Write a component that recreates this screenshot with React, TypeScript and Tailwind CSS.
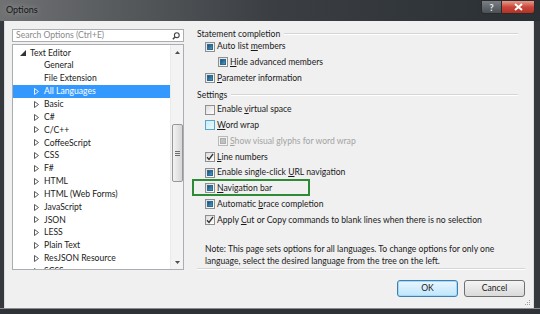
import React from 'react'

type BoxState = 'mixed' | 'checked' | 'unchecked' | 'hover' | 'disabled'

function CheckBox({ state }: { state: BoxState }) {
    if (state === 'checked') {
        return (
            <span className="w-[10px] h-[10px] border border-[#8f8f8f] bg-gradient-to-br from-[#dcdcdc] to-white flex items-center justify-center shrink-0">
                <svg width="8" height="8" viewBox="0 0 8 8">
                    <path d="M1 4.2 L3 6.4 L7 1" stroke="#333" strokeWidth="1.3" fill="none" />
                </svg>
            </span>
        )
    }
    if (state === 'hover') {
        return <span className="w-[10px] h-[10px] border border-[#5aa5c8] bg-gradient-to-br from-[#c9eef8] to-[#e9f8fc] shrink-0" />
    }
    if (state === 'unchecked') {
        return <span className="w-[10px] h-[10px] border border-[#8f8f8f] bg-gradient-to-br from-[#dcdcdc] to-white shrink-0" />
    }
    if (state === 'disabled') {
        return (
            <span className="w-[10px] h-[10px] border border-[#b9b9b9] bg-[#f4f4f4] flex items-center justify-center shrink-0">
                <span className="w-[6px] h-[6px] bg-[#c2c2c2] border border-[#adadad]" />
            </span>
        )
    }
    return (
        <span className="w-[10px] h-[10px] border border-[#8f8f8f] bg-gradient-to-br from-[#dcdcdc] to-white flex items-center justify-center shrink-0">
            <span className="w-[6px] h-[6px] bg-gradient-to-br from-[#1e4f78] to-[#4a9cc0] border border-[#2c6a92]" />
        </span>
    )
}

function Option({ state, indent, disabled, children }: { state: BoxState; indent?: boolean; disabled?: boolean; children: React.ReactNode }) {
    return (
        <div className={`h-[16px] flex items-center gap-[2px] whitespace-nowrap ${indent ? 'pl-[21px]' : 'pl-[8px]'}`}>
            <CheckBox state={state} />
            <span className={disabled ? 'text-[#a3a3a3]' : 'text-[#1a1a1a]'}>{children}</span>
        </div>
    )
}

function GroupHeader({ label, className }: { label: string; className?: string }) {
    return (
        <div className={`flex items-center gap-[4px] pr-[7px] ${className ?? ''}`}>
            <span className="text-[#1a1a1a]">{label}</span>
            <span className="flex-1 h-[2px] border-t border-[#d5d5d5] border-b border-b-white" />
        </div>
    )
}

const languages = [
    'Basic', 'C#', 'C/C++', 'CoffeeScript', 'CSS', 'F#', 'HTML', 'HTML (Web Forms)',
    'JavaScript', 'JSON', 'LESS', 'Plain Text', 'ResJSON Resource', 'SCSS',
]

function Collapsed() {
    return (
        <svg width="5" height="7" viewBox="0 0 5 7" className="shrink-0">
            <path d="M0.5 0.5 L4.5 3.5 L0.5 6.5 Z" fill="none" stroke="#5a5a5a" strokeWidth="1" />
        </svg>
    )
}

function Tree() {
    return (
        <div className="relative h-[226px] border border-[#abadb3] bg-white overflow-hidden">
            <div className="pt-[1.5px] pr-[13px]">
                <div className="h-[12.85px] flex items-center pl-[7px] gap-[4px]">
                    <svg width="6" height="6" viewBox="0 0 6 6" className="shrink-0">
                        <path d="M6 0 L6 6 L0 6 Z" fill="#333" />
                    </svg>
                    <span>Text Editor</span>
                </div>
                <div className="h-[12.85px] flex items-center pl-[31px]">General</div>
                <div className="h-[12.85px] flex items-center pl-[31px]">File Extension</div>
                <div className="h-[12.85px] flex items-center pl-[21px] gap-[5px] bg-[#3399ff] text-white">
                    <svg width="5" height="7" viewBox="0 0 5 7" className="shrink-0">
                        <path d="M0.5 0.5 L4.5 3.5 L0.5 6.5 Z" fill="none" stroke="#e8f2ff" strokeWidth="1" />
                    </svg>
                    <span>All Languages</span>
                </div>
                {languages.map(lang => (
                    <div key={lang} className="h-[12.85px] flex items-center pl-[21px] gap-[5px]">
                        <Collapsed />
                        <span>{lang}</span>
                    </div>
                ))}
            </div>

            {/* scrollbar */}
            <div className="absolute right-0 top-0 bottom-0 w-[13px] bg-[#f3f3f3] border-l border-[#eaeaea] flex flex-col items-center">
                <div className="h-[14px] flex items-center justify-center">
                    <svg width="5" height="3" viewBox="0 0 5 3"><path d="M0 3 L2.5 0 L5 3 Z" fill="#4d4d4d" /></svg>
                </div>
                <div className="mt-[65px] w-[11px] h-[58px] rounded-[2px] border border-[#979797] bg-gradient-to-r from-[#f3f3f3] to-[#d6d6d6] flex flex-col items-center justify-center gap-px">
                    <span className="w-[5px] h-px bg-[#6d6d6d]" />
                    <span className="w-[5px] h-px bg-[#6d6d6d]" />
                    <span className="w-[5px] h-px bg-[#6d6d6d]" />
                </div>
                <div className="mt-auto h-[14px] flex items-center justify-center">
                    <svg width="5" height="3" viewBox="0 0 5 3"><path d="M0 0 L2.5 3 L5 0 Z" fill="#4d4d4d" /></svg>
                </div>
            </div>
        </div>
    )
}

export default function App() {
    return (
        <div className="w-[540px] h-[314px] overflow-hidden bg-[#35393d] flex flex-col font-['Lato','Open_Sans',sans-serif] text-[8.6px] leading-none">
            {/* title bar */}
            <div className="h-[21px] flex bg-gradient-to-r from-[#6f7173] via-[#3b3f43] to-[#2a2f34]">
                <span className="pl-[6px] pt-[5px] text-[9px] text-[#161616] [text-shadow:0_0_6px_rgba(255,255,255,0.45)]">Options</span>
                <div className="ml-auto mr-[5px] flex h-[14px]">
                    <div className="w-[21px] border border-[#2a2a2a] rounded-bl-[3px] bg-gradient-to-b from-[#7b8086] to-[#4a5056] flex items-center justify-center text-[9px] font-bold text-[#eef2f5]">?</div>
                    <div className="w-[33px] border border-[#2a2a2a] border-l-0 rounded-br-[3px] bg-gradient-to-b from-[#e49a8d] via-[#c9463a] to-[#b33226] flex items-center justify-center">
                        <svg width="9" height="8" viewBox="0 0 9 8">
                            <path d="M1 1 L8 7 M8 1 L1 7" stroke="white" strokeWidth="2" />
                        </svg>
                    </div>
                </div>
            </div>

            {/* client area */}
            <div className="relative ml-[4px] w-[530px] h-[287px] bg-[#f0f0f0] border-l border-r border-[#dcdcdc] flex flex-col pt-[8px] text-[#1a1a1a]">
                <div className="flex h-[241px]">
                    {/* left column */}
                    <div className="w-[172px] ml-[7px] flex flex-col gap-[2px]">
                        <div className="h-[13px] border border-[#abadb3] bg-white flex items-center pl-[3px] pr-[3px] text-[#8a8a8a]">
                            <span>Search Options (Ctrl+E)</span>
                            <svg width="8" height="8" viewBox="0 0 8 8" className="ml-auto">
                                <circle cx="4.8" cy="3.2" r="2.4" fill="none" stroke="#444" strokeWidth="1.1" />
                                <path d="M3.1 4.9 L0.8 7.2" stroke="#444" strokeWidth="1.4" />
                            </svg>
                        </div>
                        <Tree />
                    </div>

                    {/* right column */}
                    <div className="ml-[13px] w-[328px] flex flex-col">
                        <GroupHeader label="Statement completion" className="h-[10px]" />
                        <Option state="mixed">Auto list <u>m</u>embers</Option>
                        <Option state="mixed" indent><u>H</u>ide advanced members</Option>
                        <Option state="mixed"><u>P</u>arameter information</Option>
                        <GroupHeader label="Settings" className="h-[14px] mt-[2px]" />
                        <Option state="unchecked">Enable <u>v</u>irtual space</Option>
                        <Option state="hover"><u>W</u>ord wrap</Option>
                        <Option state="disabled" indent disabled><u>S</u>how visual glyphs for word wrap</Option>
                        <Option state="checked"><u>L</u>ine numbers</Option>
                        <Option state="mixed">Enable single-click <u>U</u>RL navigation</Option>
                        <div className="relative">
                            <Option state="mixed"><u>N</u>avigation bar</Option>
                            <div className="absolute left-[-5px] top-[-1px] w-[118px] h-[17px] border-2 border-[#2d8a35]" />
                        </div>
                        <Option state="mixed">Automatic <u>b</u>race completion</Option>
                        <Option state="checked">Apply <u>C</u>ut or Copy commands to blank lines when there is no selection</Option>
                        <div className="mt-[15px] pl-[8px] leading-[12px] whitespace-nowrap">
                            <p>Note: This page sets options for all languages. To change options for only one</p>
                            <p>language, select the desired language from the tree on the left.</p>
                        </div>
                        <div className="mt-[1px] h-[2px] border-t border-[#d5d5d5] border-b border-b-white" />
                    </div>
                </div>

                {/* buttons */}
                <div className="mt-[10px] flex justify-end gap-[6px] pr-[8px]">
                    <button className="w-[61px] h-[17px] rounded-[3px] border border-[#3c7fb1] bg-gradient-to-b from-[#eaf6fd] to-[#bee6fd] shadow-[inset_0_0_0_1px_#a7d8f5]">OK</button>
                    <button className="w-[61px] h-[17px] rounded-[3px] border border-[#707070] bg-gradient-to-b from-[#f4f4f4] to-[#dadada]">Cancel</button>
                </div>

                {/* size grip */}
                <svg width="6" height="6" viewBox="0 0 6 6" className="absolute right-[2px] bottom-[2px]">
                    <rect x="4" y="0" width="1" height="1" fill="#a0a0a0" />
                    <rect x="2" y="2" width="1" height="1" fill="#a0a0a0" />
                    <rect x="4" y="2" width="1" height="1" fill="#a0a0a0" />
                    <rect x="0" y="4" width="1" height="1" fill="#a0a0a0" />
                    <rect x="2" y="4" width="1" height="1" fill="#a0a0a0" />
                    <rect x="4" y="4" width="1" height="1" fill="#a0a0a0" />
                </svg>
            </div>

            <div className="flex-1 bg-[#2f3337] border-t border-[#8a8e92]" />
        </div>
    )
}
